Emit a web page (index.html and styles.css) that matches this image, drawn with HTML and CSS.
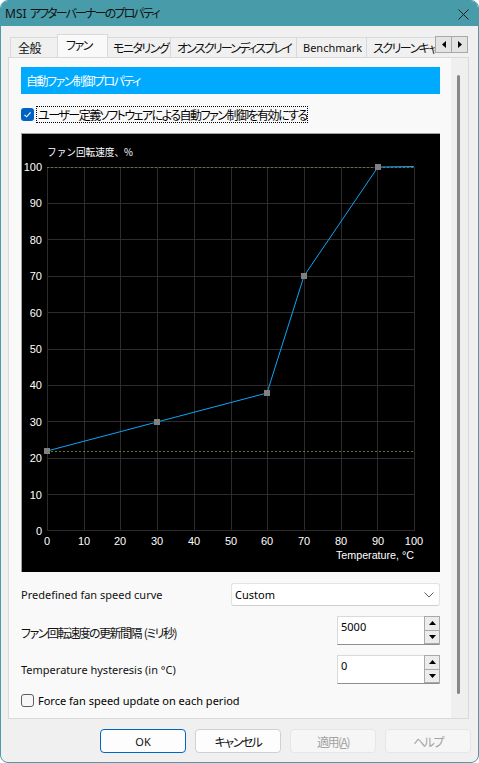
FILE: index.html
```html
<!DOCTYPE html>
<html lang="ja">
<head>
<meta charset="utf-8">
<title>MSI アフターバーナーのプロパティ</title>
<link rel="stylesheet" href="styles.css">
</head>
<body>
<div class="window">
  <div class="titlebar">
    <span class="title jp"><span class="lat">MSI </span>アフターバーナーのプロパティ</span>
    <svg class="close" width="11" height="11" viewBox="0 0 11 11"><path d="M0.5 0.5L10.5 10.5M10.5 0.5L0.5 10.5" stroke="#1c1c1c" stroke-width="1"/></svg>
  </div>

  <div class="tabrow">
    <div class="tabs">
      <div class="tab t1 jp">全般</div>
      <div class="tab t2 jp active">ファン</div>
      <div class="tab t3 jp">モニタリング</div>
      <div class="tab t4 jp">オンスクリーンディスプレイ</div>
      <div class="tab t5">Benchmark</div>
      <div class="tab t6 jp">スクリーンキャプチャ</div>
    </div>
    <div class="tabarrows">
      <div class="arrowbtn"><svg width="4" height="7" viewBox="0 0 4 7"><path d="M4 0L0 3.5L4 7Z" fill="#000"/></svg></div>
      <div class="arrowbtn"><svg width="4" height="7" viewBox="0 0 4 7"><path d="M0 0L4 3.5L0 7Z" fill="#000"/></svg></div>
    </div>
  </div>

  <div class="panel">
    <div class="content">
      <div class="header jp">自動ファン制御プロパティ</div>

      <div class="check-row first">
        <span class="cb checked"><svg width="13" height="13" viewBox="0 0 13 13"><path d="M3.5 6.8L5.6 8.8L9.6 4.4" fill="none" stroke="#fff" stroke-width="1.1"/></svg></span>
        <span class="focus jp">ユーザー定義ソフトウェアによる自動ファン制御を有効にする</span>
      </div>

      <div class="chart">
        <svg width="418" height="438" viewBox="22 134 418 438" shape-rendering="crispEdges">
          <g stroke="#2c2c2c" stroke-width="1">
            <path d="M47.5 167V531M84.5 167V531M120.5 167V531M157.5 167V531M194.5 167V531M231.5 167V531M267.5 167V531M304.5 167V531M341.5 167V531M377.5 167V531M414.5 167V531"/>
            <path d="M47 530.5H415M47 494.5H415M47 458.5H415M47 421.5H415M47 385.5H415M47 349.5H415M47 312.5H415M47 276.5H415M47 239.5H415M47 203.5H415M47 167.5H415"/>
          </g>
          <g stroke="#707028" stroke-width="1" stroke-dasharray="2 2">
            <path d="M47 167.5H414"/>
            <path d="M47 451.5H414"/>
          </g>
          <g class="axis-num" text-anchor="end">
            <text x="42" y="171">100</text>
            <text x="42" y="207">90</text>
            <text x="42" y="244">80</text>
            <text x="42" y="280">70</text>
            <text x="42" y="317">60</text>
            <text x="42" y="353">50</text>
            <text x="42" y="389">40</text>
            <text x="42" y="426">30</text>
            <text x="42" y="462">20</text>
            <text x="42" y="499">10</text>
            <text x="42" y="535">0</text>
          </g>
          <g class="axis-num" text-anchor="middle">
            <text x="47" y="545">0</text>
            <text x="84" y="545">10</text>
            <text x="120" y="545">20</text>
            <text x="157" y="545">30</text>
            <text x="194" y="545">40</text>
            <text x="231" y="545">50</text>
            <text x="267" y="545">60</text>
            <text x="304" y="545">70</text>
            <text x="341" y="545">80</text>
            <text x="378" y="545">90</text>
            <text x="414" y="545">100</text>
          </g>
          <text class="axis-title" x="336" y="559" textLength="78" lengthAdjust="spacingAndGlyphs">Temperature, °C</text>
          <text class="axis-title-jp" x="47" y="156" textLength="86" lengthAdjust="spacingAndGlyphs">ファン回転速度、%</text>
          <polyline points="47,451 157,422 267,393 304,276 378,167 414,166.5" fill="none" stroke="#0ca6f6" stroke-width="1" shape-rendering="auto"/>
          <g fill="#808080">
            <rect x="44" y="448" width="6" height="6"/>
            <rect x="154" y="419" width="6" height="6"/>
            <rect x="264" y="390" width="6" height="6"/>
            <rect x="301" y="273" width="6" height="6"/>
            <rect x="375" y="164" width="6" height="6"/>
          </g>
        </svg>
      </div>

      <div class="row r1">
        <span class="label">Predefined fan speed curve</span>
        <div class="select">
          <span>Custom</span>
          <svg width="10" height="6" viewBox="0 0 10 6"><path d="M0.5 0.5L5 5L9.5 0.5" fill="none" stroke="#5a5a5a" stroke-width="1"/></svg>
        </div>
      </div>

      <div class="row r2">
        <span class="label jp">ファン回転速度の更新間隔<span class="gap"> </span>(ミリ秒)</span>
        <div class="spin">
          <div class="field">5000</div>
          <div class="spinbtns">
            <div class="sb"><svg width="7" height="4" viewBox="0 0 7 4"><path d="M0 4L3.5 0L7 4Z" fill="#000"/></svg></div>
            <div class="sb"><svg width="7" height="4" viewBox="0 0 7 4"><path d="M0 0L3.5 4L7 0Z" fill="#000"/></svg></div>
          </div>
        </div>
      </div>

      <div class="row r3">
        <span class="label">Temperature hysteresis (in °C)</span>
        <div class="spin">
          <div class="field">0</div>
          <div class="spinbtns">
            <div class="sb"><svg width="7" height="4" viewBox="0 0 7 4"><path d="M0 4L3.5 0L7 4Z" fill="#000"/></svg></div>
            <div class="sb"><svg width="7" height="4" viewBox="0 0 7 4"><path d="M0 0L3.5 4L7 0Z" fill="#000"/></svg></div>
          </div>
        </div>
      </div>

      <div class="check-row last">
        <span class="cb"></span>
        <span class="plain">Force fan speed update on each period</span>
      </div>
    </div>
    <div class="vscroll"><div class="thumb"></div></div>
  </div>

  <div class="buttons">
    <div class="btn default">OK</div>
    <div class="btn jp">キャンセル</div>
    <div class="btn jp disabled">適用(<u>A</u>)</div>
    <div class="btn jp disabled">ヘルプ</div>
  </div>
</div>
</body>
</html>
```

FILE: styles.css
```css
html, body {
  margin: 0;
  padding: 0;
  background: #ffffff;
}

body {
  font-family: "Noto Sans", "Noto Sans CJK JP", sans-serif;
  font-size: 11px;
  color: #000;
}

.jp {
  font-family: "Noto Sans CJK JP", sans-serif;
  font-size: 12px;
  font-feature-settings: "palt" 1;
  letter-spacing: -1.5px;
}

.lat {
  font-family: "Noto Sans", sans-serif;
  letter-spacing: 0;
}

.gap {
  letter-spacing: 0;
}

.window {
  width: 479px;
  height: 763px;
  box-sizing: border-box;
  border: 1px solid #489ca9;
  border-radius: 8px;
  background: #f0f0f0;
  overflow: hidden;
  display: flex;
  flex-direction: column;
}

.titlebar {
  height: 25px;
  flex: none;
  background: #489ca9;
  display: flex;
  align-items: center;
  justify-content: space-between;
  padding: 0 9px 0 4px;
}

.title {
  line-height: 16px;
  color: #111;
  letter-spacing: -1.85px;
}

.close {
  display: block;
  margin-top: 1px;
}

/* tabs */
.tabrow {
  margin-top: 8px;
  height: 23px;
  flex: none;
  display: flex;
  padding-left: 9px;
  position: relative;
  z-index: 2;
}

.tabs {
  width: 425px;
  flex: none;
  overflow: hidden;
  display: flex;
  align-items: flex-end;
  white-space: nowrap;
}

.tab {
  flex: none;
  box-sizing: border-box;
  height: 20px;
  padding-left: 6px;
  line-height: 19px;
  border: 1px solid #d9d9d9;
  border-bottom: none;
  margin-right: -1px;
  background: #f0f0f0;
  color: #111;
  overflow: hidden;
}

.tab.t1 { width: 48px; padding-left: 7px; letter-spacing: -0.5px; }
.tab.t2 { width: 51px; }
.tab.t3 { width: 64px; padding-left: 5px; }
.tab.t4 { width: 127px; letter-spacing: -1.8px; }
.tab.t5 { width: 71px; }
.tab.t6 { width: 110px; }

.tab.active {
  height: 24px;
  margin-bottom: -1px;
  background: #f9f9f9;
  padding-left: 8px;
  line-height: 20px;
  position: relative;
  z-index: 3;
}

.tabarrows {
  display: flex;
  margin-top: 2px;
  height: 17px;
}

.arrowbtn {
  width: 17px;
  height: 17px;
  box-sizing: border-box;
  border: 1px solid #a8a8a8;
  background: #e3e3e3;
  display: flex;
  align-items: center;
  justify-content: center;
}

.arrowbtn + .arrowbtn {
  margin-left: -1px;
}

/* panel */
.panel {
  flex: none;
  height: 662px;
  box-sizing: border-box;
  margin: 0 9px 0 7px;
  border: 1px solid #d9d9d9;
  background: #f9f9f9;
  display: flex;
  position: relative;
  z-index: 1;
}

.content {
  width: 419px;
  padding: 9px 0 0 12px;
  display: flex;
  flex-direction: column;
}

.vscroll {
  margin-left: auto;
  width: 17px;
  background: #efefef;
  box-sizing: border-box;
  padding: 17px 0 24px 6px;
  display: flex;
}

.thumb {
  width: 3px;
  background: #878787;
  border-radius: 2px;
}

.header {
  height: 27px;
  background: #00aaff;
  color: #fff;
  padding-left: 5px;
  line-height: 27px;
}

.check-row {
  display: flex;
  align-items: center;
}

.check-row.first {
  margin-top: 12px;
  height: 17px;
}

.cb {
  width: 13px;
  height: 13px;
  box-sizing: border-box;
  border: 1px solid #5f5f5f;
  border-radius: 3px;
  background: #f7f7f7;
  flex: none;
}

.cb.checked {
  border: none;
  background: #0063c4;
}

.cb svg {
  display: block;
}

.focus {
  margin-left: 2px;
  height: 17px;
  box-sizing: border-box;
  border: 1px dotted #000;
  padding: 0 0 0 1px;
  line-height: 15px;
  width: 272px;
  white-space: nowrap;
  overflow: hidden;
}

.plain {
  margin-left: 4px;
  line-height: 15px;
}

.chart {
  margin-top: 10px;
  width: 419px;
  height: 439px;
  box-sizing: border-box;
  background: #000;
  border-top: 1px solid #a0a0a0;
  border-left: 1px solid #a0a0a0;
  flex: none;
}

.chart svg {
  display: block;
}

.axis-num, .axis-title {
  font-family: "Liberation Sans", sans-serif;
  font-size: 11px;
  fill: #ffffff;
}

.axis-title-jp {
  font-family: "Noto Sans CJK JP", sans-serif;
  font-size: 10px;
  fill: #ffffff;
}

.row {
  display: flex;
  align-items: center;
  justify-content: space-between;
}

.row.r1 { margin-top: 11px; height: 23px; }
.row.r2 { margin-top: 10px; height: 29px; }
.row.r3 { margin-top: 10px; height: 29px; }

.label {
  color: #111;
}

.row.r2 .label {
  margin-top: 4px;
}

.row.r3 .label {
  margin-top: -1px;
}

.select {
  width: 209px;
  height: 23px;
  box-sizing: border-box;
  border: 1px solid #e3e3e3;
  border-bottom-color: #cfcfcf;
  border-radius: 3px;
  background: #fff;
  display: flex;
  align-items: center;
  justify-content: space-between;
  padding: 0 5px 0 3px;
}

.spin {
  width: 103px;
  height: 29px;
  box-sizing: border-box;
  display: flex;
  background: #fff;
  border: 1px solid #dadada;
  border-bottom-color: #8e8e8e;
}

.field {
  flex: 1;
  padding: 2px 0 0 3px;
  line-height: 15px;
}

.spinbtns {
  width: 16px;
  display: flex;
  flex-direction: column;
  margin: -1px -1px 0 0;
}

.sb {
  flex: 1;
  box-sizing: border-box;
  border: 1px solid #a9a9a9;
  background: #ececec;
  display: flex;
  align-items: center;
  justify-content: center;
}

.sb + .sb {
  margin-top: -1px;
}

.check-row.last {
  margin-top: 10px;
  height: 13px;
}

/* buttons */
.buttons {
  margin-top: 10px;
  height: 24px;
  display: flex;
  justify-content: flex-end;
  gap: 9px;
  padding-right: 7px;
}

.btn {
  width: 86px;
  height: 24px;
  box-sizing: border-box;
  border: 1px solid #d0d0d0;
  border-radius: 4px;
  background: #fdfdfd;
  display: flex;
  align-items: center;
  justify-content: center;
  color: #111;
}

.btn.default {
  border-color: #0067c0;
}

.btn.disabled {
  background: #f6f6f6;
  border-color: #e6e6e6;
  color: #a2a2a2;
}
```
